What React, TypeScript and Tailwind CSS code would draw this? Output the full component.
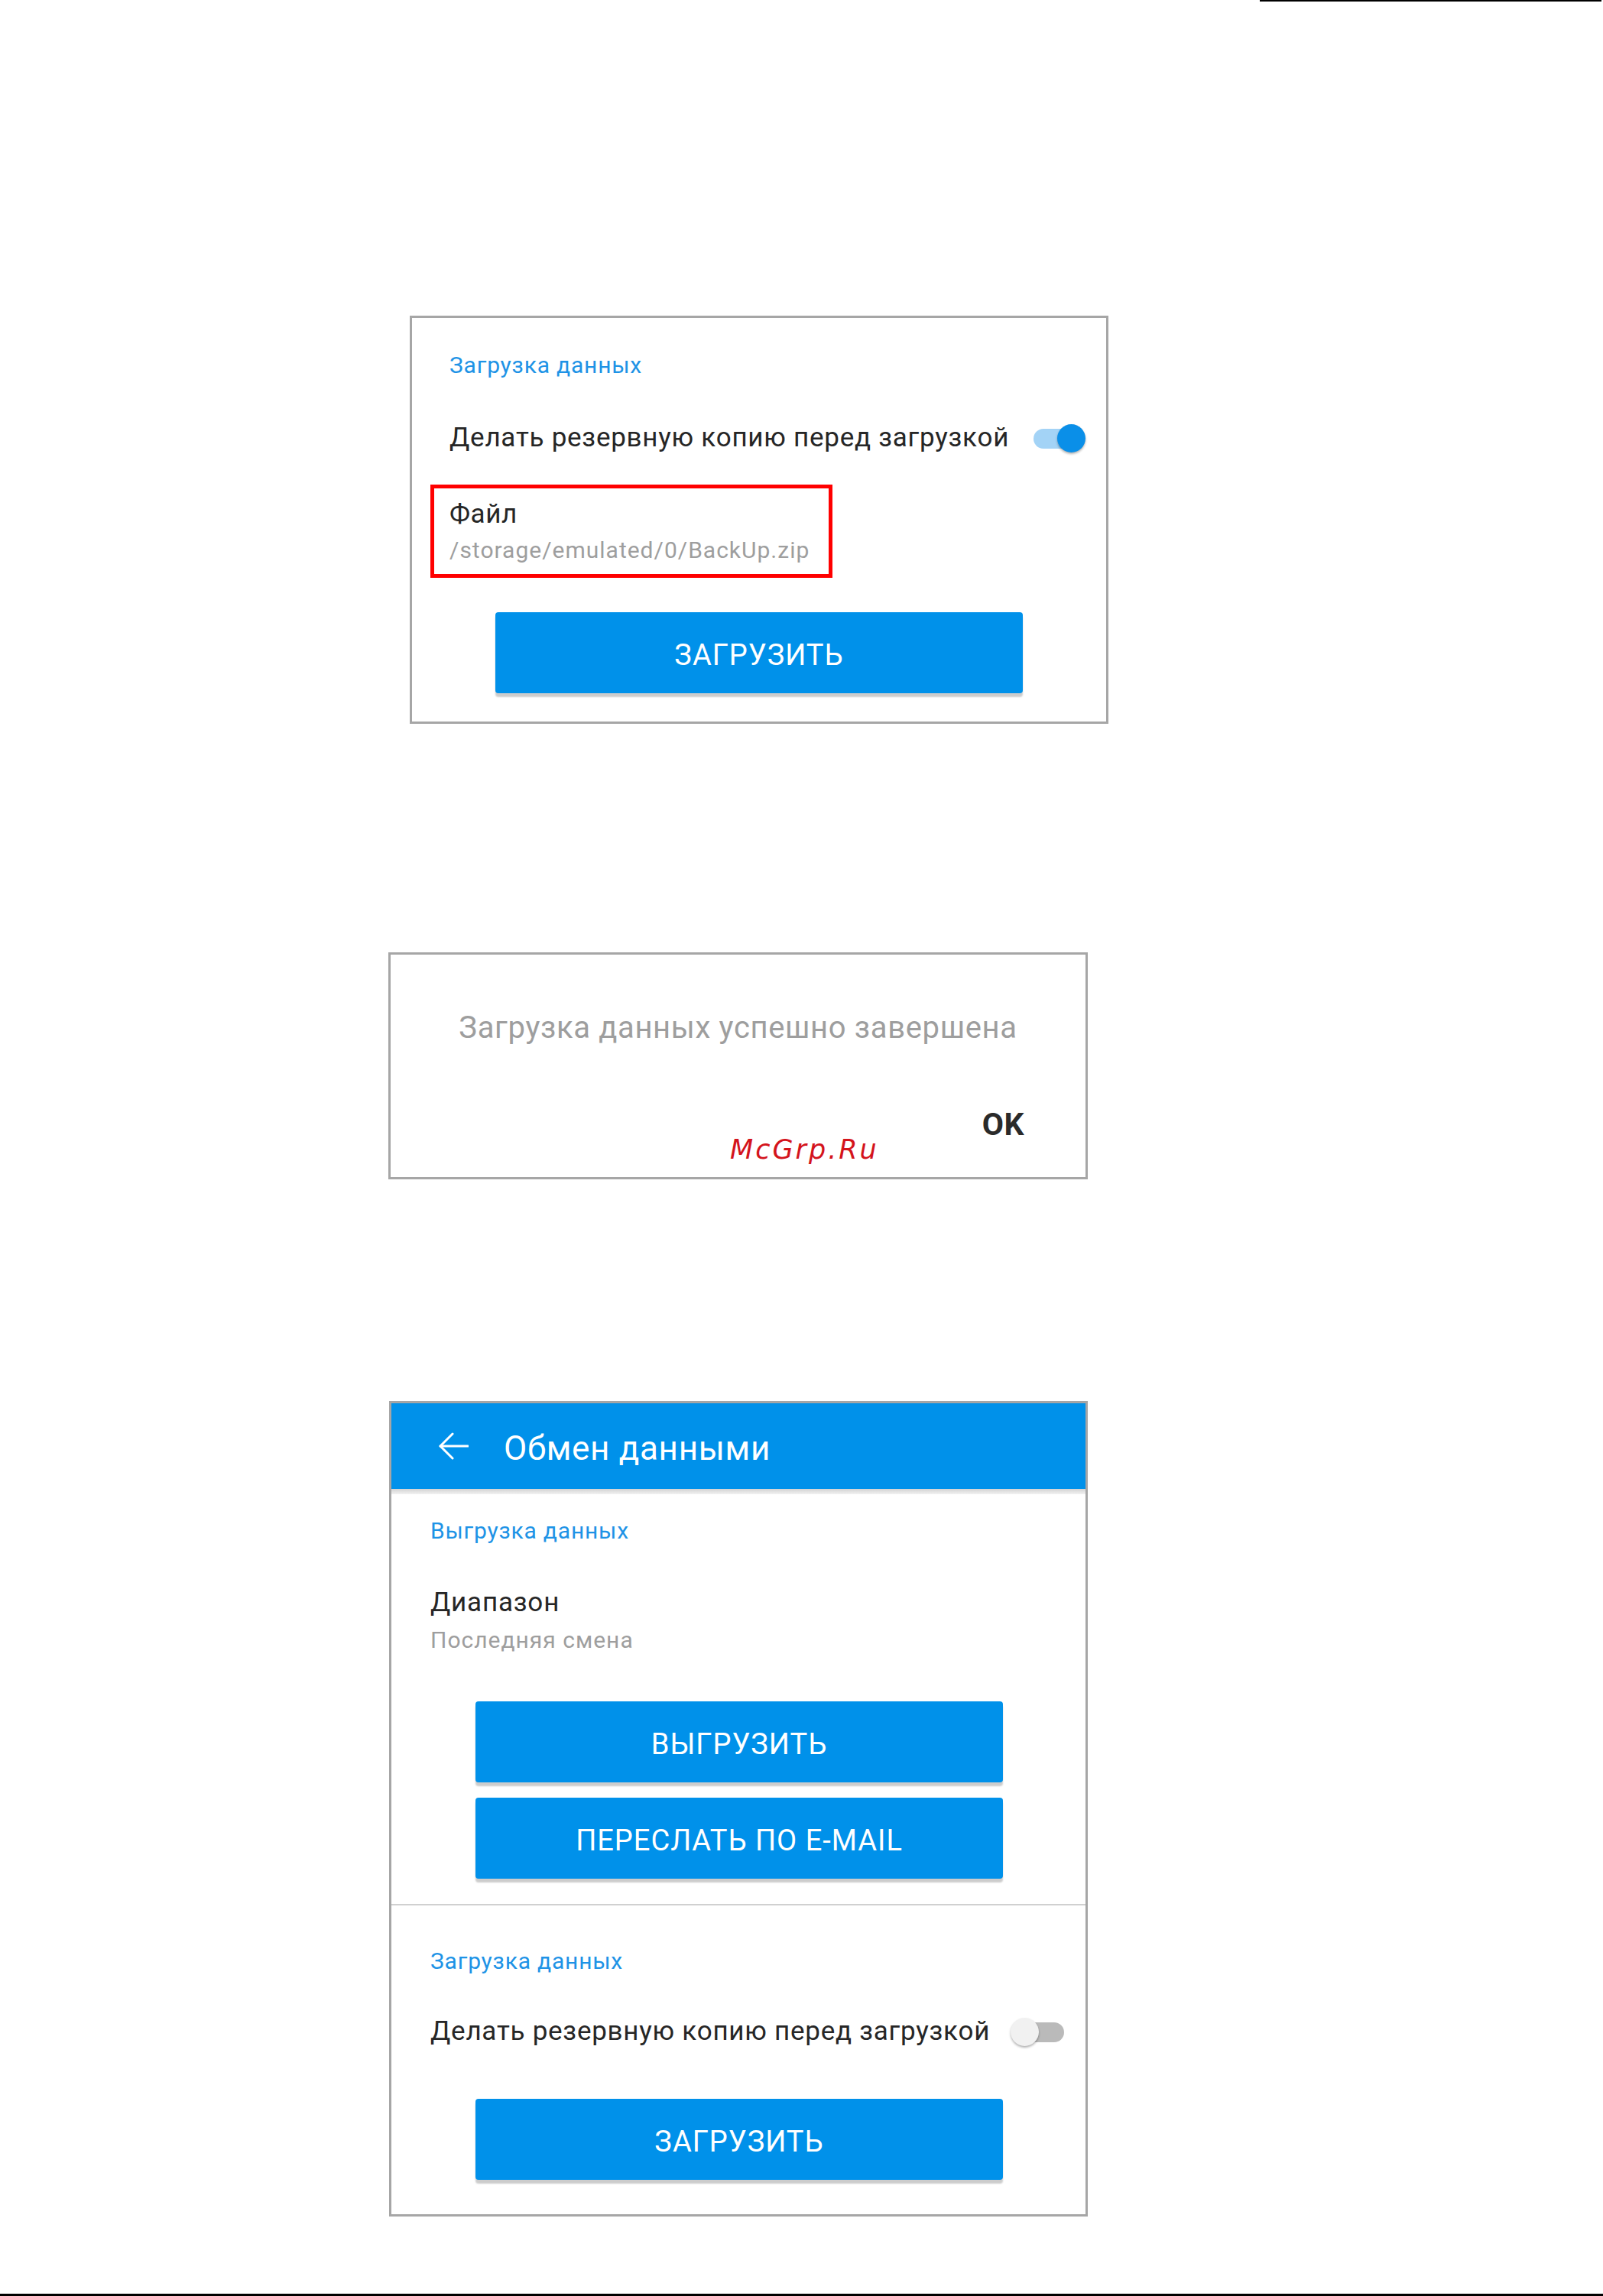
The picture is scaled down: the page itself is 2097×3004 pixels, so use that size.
import React from "react";

const font = { fontFamily: "Roboto, 'Noto Sans', Arial, sans-serif" };

function Toggle({ on }: { on: boolean }) {
  if (on) {
    return (
      <div className="relative w-[70px] h-[37px] shrink-0">
        <div className="absolute left-0 top-[6px] w-[63px] h-[26px] rounded-full bg-[#a3d3f6]" />
        <div className="absolute right-[2px] top-0 w-[37px] h-[37px] rounded-full bg-[#0a8fe8] shadow-[0_2px_3px_rgba(0,0,0,0.3)]" />
      </div>
    );
  }
  return (
    <div className="relative w-[70px] h-[37px] shrink-0">
      <div className="absolute left-[3px] right-0 top-[6px] h-[26px] rounded-full bg-[#bababa]" />
      <div className="absolute left-0 top-0 w-[37px] h-[37px] rounded-full bg-[#f1f1f1] shadow-[0_2px_3px_rgba(0,0,0,0.3)]" />
    </div>
  );
}

function BlueButton({ label }: { label: string }) {
  return (
    <div className="h-[106px] w-[690px] rounded-[4px] bg-[#0091ea] shadow-[0_5px_2px_rgba(0,0,0,0.2)] flex items-center justify-center pt-[5px] text-white text-[38px] leading-[44px] tracking-[1px]">
      {label}
    </div>
  );
}

export default function App() {
  return (
    <div className="relative w-[2097px] h-[3004px] bg-white flex flex-col" style={font}>
      {/* top rule */}
      <div className="h-[2px] ml-[1648px] w-[447px] bg-black" />

      {/* panel 1 */}
      <div className="mt-[411px] ml-[536px] w-[914px] h-[534px] border-[3px] border-[#a6a6a6] flex flex-col">
        <div className="pt-[44px] pl-[49px] text-[30px] leading-[36px] tracking-[0.8px] text-[#1e93e6]">
          Загрузка данных
        </div>
        <div className="mt-[56px] pl-[49px] pr-[25px] flex items-center">
          <span className="text-[35px] leading-[42px] tracking-[0.75px] text-[#262626]">
            Делать резервную копию перед загрузкой
          </span>
          <div className="ml-auto">
            <Toggle on />
          </div>
        </div>
        <div className="mt-[40px] ml-[24px] w-[526px] h-[122px] border-[5px] border-[#ff0000] pl-[20px] pt-[14px]">
          <div className="text-[35px] leading-[40px] tracking-[0.6px] text-[#262626]">Файл</div>
          <div className="mt-[10px] text-[30px] leading-[34px] tracking-[1px] text-[#9e9e9e]">
            /storage/emulated/0/BackUp.zip
          </div>
        </div>
        <div className="mt-[45px] ml-[109px]">
          <BlueButton label="ЗАГРУЗИТЬ" />
        </div>
      </div>

      {/* panel 2 */}
      <div className="relative mt-[299px] ml-[508px] w-[915px] h-[297px] border-[3px] border-[#a6a6a6] flex flex-col">
        <div className="pt-[72px] text-center text-[40px] leading-[48px] tracking-[0.65px] text-[#9e9e9e]">
          Загрузка данных успешно завершена
        </div>
        <div className="mt-[78px] pr-[80px] flex justify-end">
          <span className="text-[41px] leading-[48px] font-bold tracking-[0.5px] text-[#2a2a2a]">OK</span>
        </div>
        <div
          className="absolute left-[444px] top-[238px] text-[35px] leading-[35px] italic tracking-[3px] text-[#d4141c]"
          style={{ fontFamily: "'DejaVu Sans', Verdana, sans-serif" }}
        >
          McGrp.Ru
        </div>
      </div>

      {/* panel 3 */}
      <div className="mt-[290px] ml-[509px] w-[914px] h-[1067px] border-[3px] border-[#a6a6a6] flex flex-col">
        <div className="h-[112px] bg-[#0091ea] flex items-start pl-[61px]">
          <svg
            className="mt-[38px] shrink-0"
            width="40"
            height="36"
            viewBox="0 0 40 36"
            fill="none"
            stroke="white"
            strokeWidth="3"
            strokeLinecap="round"
            strokeLinejoin="round"
          >
            <path d="M3 18H39" />
            <path d="M19 2L3 18L19 34" />
          </svg>
          <span className="ml-[46px] mt-[34px] text-[44px] leading-[50px] tracking-[0.7px] text-white">
            Обмен данными
          </span>
        </div>
        <div className="h-[7px] bg-gradient-to-b from-[#d2d2d2] to-[#f2f2f2]" />
        <div className="mt-[30px] pl-[51px] text-[30px] leading-[36px] tracking-[0.8px] text-[#1e93e6]">
          Выгрузка данных
        </div>
        <div className="mt-[56px] pl-[51px] text-[35px] leading-[40px] tracking-[0.8px] text-[#262626]">
          Диапазон
        </div>
        <div className="mt-[12px] pl-[51px] text-[30px] leading-[34px] tracking-[1px] text-[#9e9e9e]">
          Последняя смена
        </div>
        <div className="mt-[63px] ml-[110px] flex flex-col gap-[20px]">
          <BlueButton label="ВЫГРУЗИТЬ" />
          <BlueButton label="ПЕРЕСЛАТЬ ПО E-MAIL" />
        </div>
        <div className="mt-[33px] h-[2px] bg-[#d0d0d0]" />
        <div className="mt-[55px] pl-[51px] text-[30px] leading-[36px] tracking-[0.8px] text-[#1e93e6]">
          Загрузка данных
        </div>
        <div className="mt-[53px] pl-[51px] pr-[28px] flex items-center">
          <span className="text-[35px] leading-[42px] tracking-[0.75px] text-[#262626]">
            Делать резервную копию перед загрузкой
          </span>
          <div className="ml-auto">
            <Toggle on={false} />
          </div>
        </div>
        <div className="mt-[67px] ml-[110px]">
          <BlueButton label="ЗАГРУЗИТЬ" />
        </div>
      </div>

      {/* bottom rule */}
      <div className="mt-auto h-[3px] w-full bg-black" />
    </div>
  );
}
